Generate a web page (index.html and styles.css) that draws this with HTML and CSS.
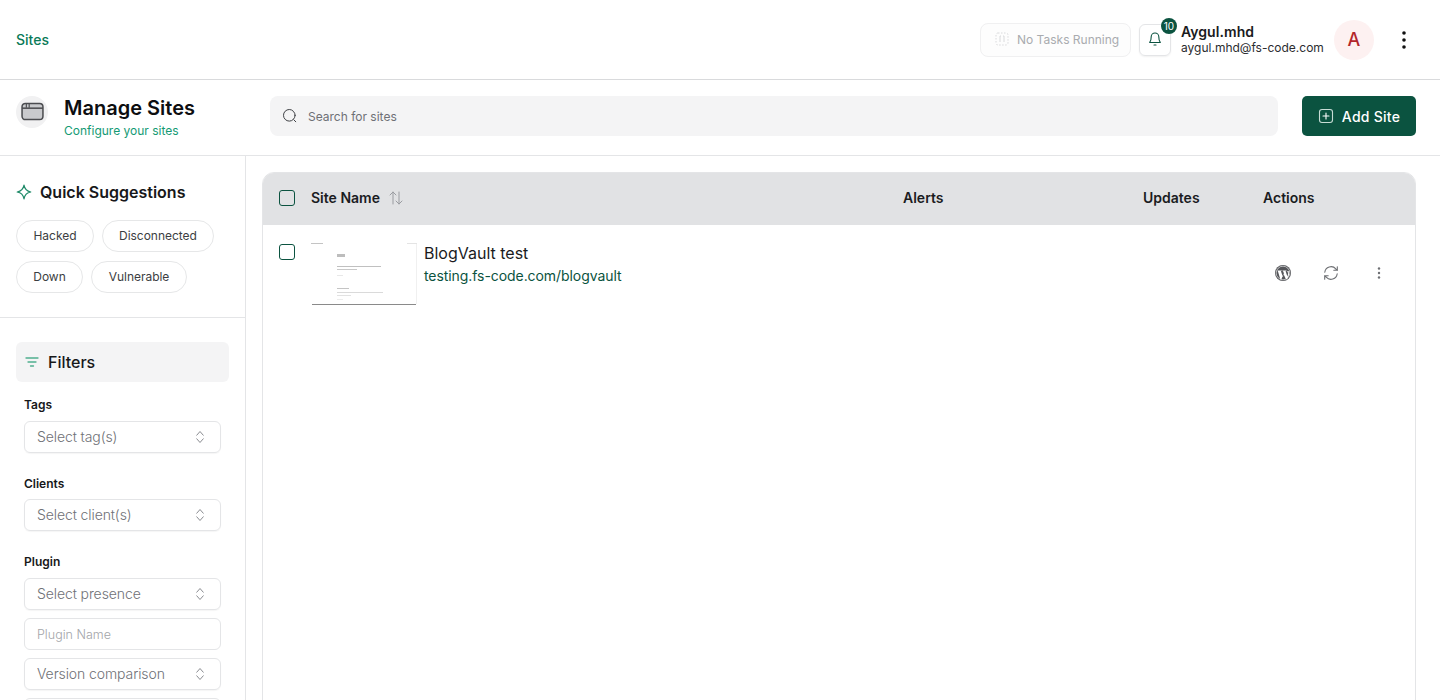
FILE: index.html
```html
<!DOCTYPE html>
<html lang="en">
<head>
<meta charset="utf-8">
<title>Manage Sites</title>
<link rel="stylesheet" href="styles.css">
</head>
<body>
<header class="topbar">
  <a class="crumb">Sites</a>
  <div class="top-right">
    <div class="tasks">
      <svg class="tasks-icon" width="16" height="16" viewBox="0 0 16 16" fill="none" stroke="#d9dadc" stroke-width="1"><rect x="2" y="2" width="12" height="12" rx="2" stroke-dasharray="1.5 1.5"/><path d="M6 5v6M10 5v6M6 5h1M9 5h1"/></svg>
      <span>No Tasks Running</span>
    </div>
    <div class="bell">
      <svg width="16" height="16" viewBox="0 0 16 16" fill="none" stroke="#0b5340" stroke-width="1.1" stroke-linecap="round" stroke-linejoin="round"><path d="M4.2 5.800a3.800 3.800 0 0 1 7.600 0c0 3.500.6 4.800 1.500 5.700H2.700c.9-.9 1.500-2.200 1.500-5.700Z"/><path d="M7 14h2"/></svg>
      <span class="badge">10</span>
    </div>
    <div class="user">
      <div class="user-name">Aygul.mhd</div>
      <div class="user-mail">aygul.mhd@fs-code.com</div>
    </div>
    <div class="avatar">A</div>
    <svg class="kebab" width="4" height="20" viewBox="0 0 4 20" fill="#111"><circle cx="2" cy="3" r="1.800"/><circle cx="2" cy="10" r="1.800"/><circle cx="2" cy="17" r="1.800"/></svg>
  </div>
</header>

<section class="pagehead">
  <div class="title-block">
    <div class="page-icon">
      <svg width="24" height="20" viewBox="0 0 24 20" fill="#c9cacd" stroke="#4b4c50" stroke-width="1.600"><rect x="1" y="1.500" width="22" height="17" rx="3.500"/><path d="M1 6.500h22" fill="none"/><path d="M5.500 2v4M8.500 2v4" fill="none" stroke-width="1.200"/></svg>
    </div>
    <div>
      <h1>Manage Sites</h1>
      <p>Configure your sites</p>
    </div>
  </div>
  <div class="search">
    <svg width="16" height="16" viewBox="0 0 16 16" fill="none" stroke="#3f4145" stroke-width="1" stroke-linecap="round"><circle cx="7.300" cy="7.300" r="5.800"/><path d="m11.800 11.800 2 2"/></svg>
    <span>Search for sites</span>
  </div>
  <button class="add-btn">
    <svg width="16" height="16" viewBox="0 0 16 16" fill="none" stroke="#c7dcd5" stroke-width="1.100" stroke-linecap="round"><rect x="1.500" y="1.500" width="13" height="13" rx="2.500"/><path d="M8 5v6M5 8h6" stroke="#fff"/></svg>
    Add Site
  </button>
</section>

<div class="content">
  <aside class="sidebar">
    <div class="suggest">
      <h2>
        <svg width="16" height="16" viewBox="0 0 16 16" fill="none" stroke="#1f8a68" stroke-width="1.200" stroke-linejoin="round"><path d="M8 1.200c.7 4 2.800 6.100 6.800 6.800-4 .7-6.100 2.800-6.800 6.800-.7-4-2.800-6.100-6.800-6.800 4-.7 6.100-2.800 6.800-6.800Z"/></svg>
        Quick Suggestions
      </h2>
      <div class="chips">
        <span class="chip">Hacked</span>
        <span class="chip">Disconnected</span>
        <span class="chip">Down</span>
        <span class="chip">Vulnerable</span>
      </div>
    </div>
    <div class="filters">
      <div class="filters-head">
        <svg width="16" height="16" viewBox="0 0 16 16" fill="none" stroke="#4fae8f" stroke-width="1.300" stroke-linecap="round"><path d="M2 4h12M4 8h8M6.500 12h3"/></svg>
        Filters
      </div>
      <label class="field-label first">Tags</label>
      <div class="select">Select tag(s)<svg class="updown" width="12" height="16" viewBox="0 0 12 16" fill="none" stroke="#8a8c91" stroke-width="1" stroke-linejoin="round"><path d="m2.500 6.500 3.500-4 3.500 4M2.500 9.500l3.500 4 3.500-4"/></svg></div>
      <label class="field-label tight">Clients</label>
      <div class="select">Select client(s)<svg class="updown" width="12" height="16" viewBox="0 0 12 16" fill="none" stroke="#8a8c91" stroke-width="1" stroke-linejoin="round"><path d="m2.500 6.500 3.500-4 3.500 4M2.500 9.500l3.500 4 3.500-4"/></svg></div>
      <label class="field-label">Plugin</label>
      <div class="stack">
        <div class="select">Select presence<svg class="updown" width="12" height="16" viewBox="0 0 12 16" fill="none" stroke="#8a8c91" stroke-width="1" stroke-linejoin="round"><path d="m2.500 6.500 3.500-4 3.500 4M2.500 9.500l3.500 4 3.500-4"/></svg></div>
        <div class="select input">Plugin Name</div>
        <div class="select">Version comparison<svg class="updown" width="12" height="16" viewBox="0 0 12 16" fill="none" stroke="#8a8c91" stroke-width="1" stroke-linejoin="round"><path d="m2.500 6.500 3.500-4 3.500 4M2.500 9.500l3.500 4 3.500-4"/></svg></div>
        <div class="select input"></div>
      </div>
    </div>
  </aside>

  <main class="main">
    <div class="table">
      <div class="row head">
        <div class="c-check"><span class="check"></span></div>
        <div class="c-name">Site Name
          <svg class="sort" width="16" height="16" viewBox="0 0 16 16" fill="none" stroke="#9a9ca1" stroke-width="1" stroke-linecap="round" stroke-linejoin="round"><path d="M5 14V2M2 5l3-3 3 3M11 2v12M8 11l3 3 3-3"/></svg>
        </div>
        <div class="c-alerts">Alerts</div>
        <div class="c-updates">Updates</div>
        <div class="c-actions">Actions</div>
      </div>
      <div class="row site">
        <div class="c-check"><span class="check"></span></div>
        <div class="c-name site-cell">
          <svg class="thumb" width="106" height="64" viewBox="0 0 106 64">
            <rect width="106" height="64" fill="#fff"/>
            <rect x="0" y="1" width="12" height="1" fill="#c4c4c4"/>
            <rect x="96" y="1" width="10" height="1" fill="#e4e4e4"/>
            <rect x="26" y="12" width="8" height="3" fill="#bdbdbd"/>
            <rect x="26" y="24" width="44" height="1" fill="#c0c0c0"/>
            <rect x="26" y="27" width="20" height="1" fill="#c8c8c8"/>
            <rect x="26" y="33" width="6" height="1" fill="#e8e8e8"/>
            <rect x="26" y="46" width="12" height="1" fill="#c4c4c4"/>
            <rect x="26" y="50" width="46" height="1" fill="#dadada"/>
            <rect x="26" y="53" width="14" height="1" fill="#e2e2e2"/>
            <rect x="26" y="57" width="6" height="1" fill="#ececec"/>
            <rect x="1" y="62" width="104" height="1" fill="#8a8a8a"/>
            <rect x="105" y="2" width="1" height="60" fill="#f0f0f0"/>
          </svg>
          <div class="site-text">
            <div class="site-title">BlogVault test</div>
            <a class="site-url">testing.fs-code.com/blogvault</a>
          </div>
        </div>
        <div class="c-alerts"></div>
        <div class="c-updates"></div>
        <div class="c-actions site-actions">
          <svg width="16" height="16" viewBox="0 0 16 16"><circle cx="8" cy="8" r="8" fill="#55565a"/><circle cx="8" cy="8" r="6.800" fill="none" stroke="#fff" stroke-width=".6"/><path d="M2.600 5.600h4.200l-.1.500-.8.100 1.900 5.300 1.100-3.200-.8-2.100-.6-.1v-.5h4l-.1.500-.8.100 1.800 5.200.5-1.700c.3-1.200.2-2-.4-3l-.3-.6h1.500L14 10l-1.900 4.200h-1.200L8.500 8.900 6.400 14.200H5.300L2.900 6.200l-.5-.1Z" fill="#fff"/></svg>
          <svg width="16" height="16" viewBox="0 0 16 16" fill="none" stroke="#6d6f73" stroke-width="1.100" stroke-linecap="round" stroke-linejoin="round"><path d="M1.800 7.200A6.300 6.300 0 0 1 12.800 3.800L14.300 5.300M14.300 1.800v3.500h-3.500M14.200 8.800A6.300 6.300 0 0 1 3.200 12.200L1.700 10.700M1.700 14.200v-3.500h3.500"/></svg>
          <svg width="16" height="16" viewBox="0 0 16 16" fill="#6d6f73"><circle cx="8" cy="3.500" r="1.200"/><circle cx="8" cy="8" r="1.200"/><circle cx="8" cy="12.500" r="1.200"/></svg>
        </div>
      </div>
    </div>
  </main>
</div>
</body>
</html>
```
FILE: styles.css
```css
* { box-sizing: border-box; }
html, body { margin: 0; height: 700px; overflow: hidden; background: #fff; }
body { font-family: Inter, "Liberation Sans", sans-serif; color: #111214; }

.topbar { height: 80px; border-bottom: 1px solid #d9dadc; display: flex; align-items: center; justify-content: space-between; padding: 0 34px 0 16px; }
.crumb { font-size: 14px; font-weight: 500; color: #0a7a57; }
.top-right { display: flex; align-items: center; }
.tasks { width: 151px; height: 34px; margin-right: 8px; border: 1px solid #f0f0f1; border-radius: 8px; display: flex; align-items: center; padding: 0 0 1px 13px; gap: 7px; font-size: 12px; color: #a9abaf; background: #fdfdfd; }
.bell { position: relative; width: 32px; height: 32px; margin-right: 10px; border: 1px solid #e4e5e7; border-radius: 6px; display: flex; align-items: center; justify-content: center; padding-bottom: 2px; box-shadow: 0 1px 2px rgba(0,0,0,.06); }
.badge { position: absolute; top: -7px; right: -7px; width: 16px; height: 16px; border-radius: 50%; background: #0b5340; color: #fff; font-size: 10px; line-height: 16px; text-align: center; }
.user { width: 143px; margin-right: 10px; }
.user-name { font-size: 14px; font-weight: 600; line-height: 16px; color: #1a1b1d; letter-spacing: .05px; }
.user-mail { font-size: 12px; line-height: 16px; color: #2b2c2f; white-space: nowrap; }
.avatar { width: 40px; height: 40px; border-radius: 50%; background: #fdf1f1; color: #b3262b; display: flex; align-items: center; justify-content: center; font-size: 18px; font-weight: 500; margin-right: 28px; }
.kebab { display: block; }

.pagehead { height: 76px; border-bottom: 1px solid #e4e5e7; display: flex; align-items: flex-start; padding: 16px 24px 0 16px; }
.title-block { width: 254px; display: flex; align-items: center; gap: 16px; flex: none; margin-top: -2px; }
.page-icon { width: 32px; height: 32px; border-radius: 50%; background: #f1f1f2; display: flex; align-items: center; justify-content: center; margin-bottom: 10px; }
.page-icon svg { width: 23px; height: 19px; }
h1 { margin: 0; font-size: 20px; line-height: 28px; font-weight: 600; color: #0d0e10; }
.title-block p { margin: 1px 0 0; font-size: 12px; line-height: 16px; font-weight: 400; color: #149a74; }
.search { flex: 1; height: 40px; background: #f4f4f5; border-radius: 8px; display: flex; align-items: center; gap: 10px; padding-left: 12px; font-size: 12px; color: #6e7075; }
.add-btn { margin-left: 24px; width: 114px; height: 40px; border: 0; border-radius: 5px; background: #0b5340; color: #fff; font: 500 14px Inter, "Liberation Sans", sans-serif; letter-spacing: .25px; display: flex; align-items: center; justify-content: center; gap: 8px; }

.content { display: flex; height: 544px; }
.sidebar { width: 246px; flex: none; border-right: 1px solid #e4e5e7; overflow: hidden; }
.suggest { padding: 24px 16px 24px; border-bottom: 1px solid #e4e5e7; height: 162px; }
h2 { margin: 0 0 16px; display: flex; align-items: center; gap: 8px; font-size: 16px; line-height: 24px; font-weight: 600; color: #17181a; }
.chips { display: flex; flex-wrap: wrap; gap: 9px 8px; }
.chip { height: 32px; min-width: 67px; padding: 0 16px 1px; border: 1px solid #e6e7e8; border-radius: 16px; display: flex; align-items: center; justify-content: center; font-size: 12px; letter-spacing: -.02px; color: #3c3e42; }
.chip:first-child { min-width: 78px; }
.chip:last-child { min-width: 96px; }
.filters { padding: 24px 16px 0; }
.filters-head { height: 40px; background: #f4f4f5; border-radius: 6px; display: flex; align-items: center; gap: 8px; padding-left: 8px; font-size: 16px; font-weight: 500; color: #17181a; }
.field-label { display: block; margin: 23px 8px 8px; font-size: 12px; line-height: 16px; font-weight: 600; color: #17181a; }
.field-label.first { margin-top: 15px; }
.field-label.tight { margin-bottom: 7px; }
.select { position: relative; height: 32px; margin: 0 8px; border: 1px solid #e4e5e7; border-radius: 6px; display: flex; align-items: center; padding: 0 0 2px 12px; font-size: 14px; font-weight: 300; letter-spacing: -.1px; color: #6f7176; box-shadow: 0 1px 1px rgba(0,0,0,.04); }
.select.input { font-size: 12.500px; letter-spacing: 0; padding-bottom: 0; color: #a3a5a9; box-shadow: none; }
.updown { position: absolute; right: 14px; top: 7px; }
.stack { display: flex; flex-direction: column; gap: 8px; }

.main { flex: 1; padding: 16px 24px 0 16px; min-width: 0; }
.table { height: 600px; border: 1px solid #e4e5e7; border-radius: 12px 12px 0 0; overflow: hidden; }
.row { display: flex; }
.row.head { height: 53px; background: #e1e2e4; align-items: center; font-size: 14px; font-weight: 600; color: #1b1c1f; margin: -1px -1px 0; padding: 0 0 2px 1px; }
.c-check { width: 48px; flex: none; padding-left: 16px; }
.c-name { width: 592px; flex: none; display: flex; align-items: center; }
.c-alerts { width: 240px; flex: none; }
.c-updates { width: 120px; flex: none; }
.c-actions { flex: 1; }
.check { display: block; width: 16px; height: 16px; border: 1.500px solid #0b5340; border-radius: 3px; background: transparent; }
.sort { margin-left: 8px; }

.row.site { height: 96px; }
.site .c-check { padding-top: 19px; }
.site-cell { align-items: flex-start; padding-top: 17px; }
.thumb { flex: none; display: block; }
.site-text { margin: -1px 0 0 7px; }
.site-title { font-size: 16px; line-height: 24px; margin-bottom: 1px; font-weight: 400; color: #1a1b1d; }
.site-url { display: block; font-size: 14px; line-height: 20px; letter-spacing: -.07px; color: #0b5340; }
.site-actions { display: flex; gap: 32px; padding: 40px 0 0 12px; align-items: flex-start; }
```
